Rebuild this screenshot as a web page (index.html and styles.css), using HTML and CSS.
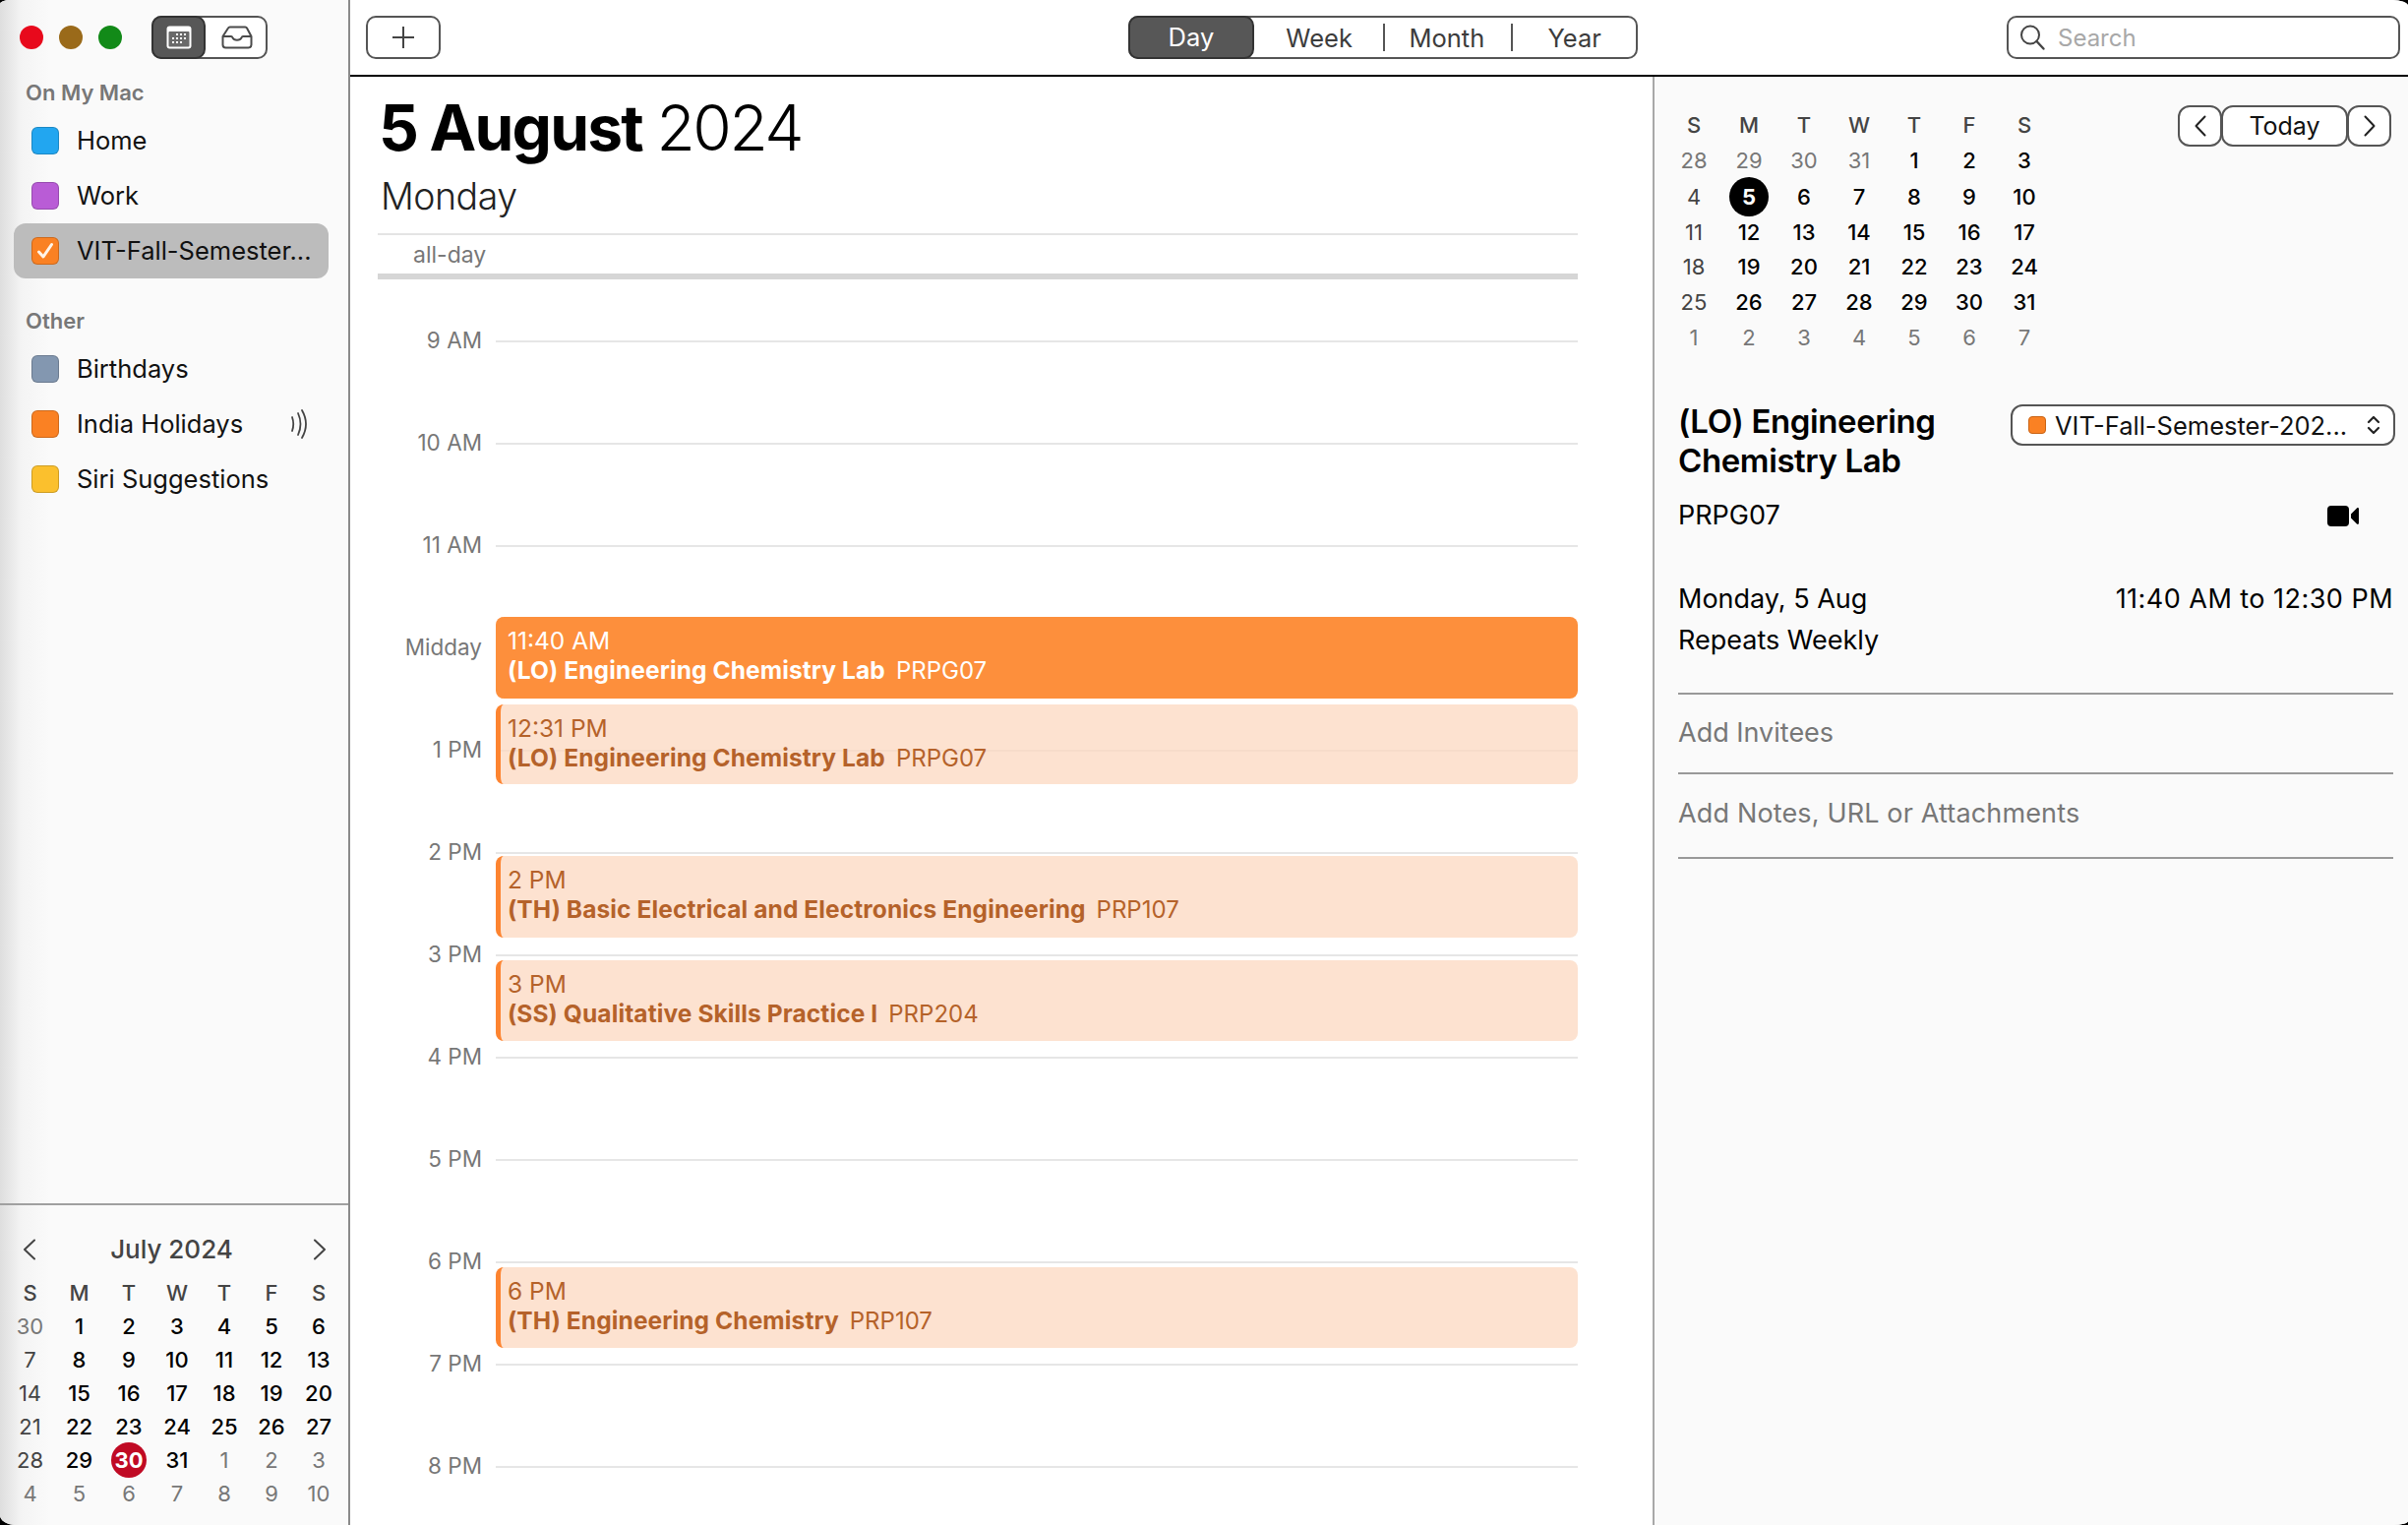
FILE: index.html
```html
<!DOCTYPE html>
<html lang="en">
<head>
<meta charset="utf-8">
<title>Calendar</title>
<link rel="stylesheet" href="styles.css">
</head>
<body>
<div class="app">
  <aside class="sidebar">
    <div class="side-top">
      <div class="lights"><span class="light red"></span><span class="light amber"></span><span class="light green"></span></div>
      <div class="view-toggle">
        <span class="toggle-on">
          <svg width="26" height="24" viewBox="0 0 26 24"><rect x="0.5" y="0.5" width="25" height="23" rx="3" fill="#fff"/><rect x="2.5" y="6" width="21" height="15.5" rx="1" fill="#6a6a6a"/><g fill="#fff"><rect x="10" y="8" width="2" height="2"/><rect x="14" y="8" width="2" height="2"/><rect x="18" y="8" width="2" height="2"/><rect x="6" y="12" width="2" height="2"/><rect x="10" y="12" width="2" height="2"/><rect x="14" y="12" width="2" height="2"/><rect x="18" y="12" width="2" height="2"/><rect x="6" y="16" width="2" height="2"/><rect x="10" y="16" width="2" height="2"/><rect x="14" y="16" width="2" height="2"/></g></svg>
        </span>
        <span class="toggle-off">
          <svg width="32" height="24" viewBox="0 0 32 24" fill="none" stroke="#4a4a4a" stroke-width="2" stroke-linejoin="round"><path d="M1.5 11 7 2.5a2 2 0 0 1 1.700-1h15.600a2 2 0 0 1 1.700 1L30.500 11v8.500a3 3 0 0 1-3 3h-23a3 3 0 0 1-3-3Z"/><path d="M1.500 11H10c.8 0 1.200.6 1.500 1.300.6 1.400 2.200 2.400 4.500 2.400s3.900-1 4.500-2.400c.3-.7.7-1.300 1.500-1.300h8.500"/></svg>
        </span>
      </div>
    </div>
    <h2 class="group-title">On My Mac</h2>
    <ul class="cal-list">
      <li class="cal-row"><span class="swatch s-blue"></span><span class="cal-name">Home</span></li>
      <li class="cal-row"><span class="swatch s-purple"></span><span class="cal-name">Work</span></li>
      <li class="cal-row selected"><span class="swatch s-orange"><svg width="22" height="22" viewBox="0 0 22 22" fill="none" stroke="#fff4e8" stroke-width="3" stroke-linecap="round" stroke-linejoin="round"><path d="M4.500 12 9 17 17.500 4.500"/></svg></span><span class="cal-name">VIT-Fall-Semester...</span></li>
    </ul>
    <h2 class="group-title other">Other</h2>
    <ul class="cal-list">
      <li class="cal-row"><span class="swatch s-slate"></span><span class="cal-name">Birthdays</span></li>
      <li class="cal-row"><span class="swatch s-orange"></span><span class="cal-name">India Holidays</span>
        <svg class="cast" width="22" height="30" viewBox="0 0 22 30" fill="none" stroke="#444" stroke-width="1.800" stroke-linecap="round"><path d="M3 8q2.500 7 0 14"/><path d="M9 4q5 11 0 22"/><path d="M13 1q8 14 0 28"/></svg>
      </li>
      <li class="cal-row"><span class="swatch s-yellow"></span><span class="cal-name">Siri Suggestions</span></li>
    </ul>
    <div class="side-cal">
      <div class="side-cal-head">
        <svg width="14" height="22" viewBox="0 0 14 22" fill="none" stroke="#444" stroke-width="2" stroke-linecap="round" stroke-linejoin="round"><path d="M12 1.500 2 11l10 9.500"/></svg>
        <span class="side-cal-title">July 2024</span>
        <svg width="14" height="22" viewBox="0 0 14 22" fill="none" stroke="#444" stroke-width="2" stroke-linecap="round" stroke-linejoin="round"><path d="M2 1.500 12 11 2 20.500"/></svg>
      </div>
      <div class="side-grid">
        <span class="dow">S</span><span class="dow">M</span><span class="dow">T</span><span class="dow">W</span><span class="dow">T</span><span class="dow">F</span><span class="dow">S</span>
        <span class="out">30</span><span>1</span><span>2</span><span>3</span><span>4</span><span>5</span><span>6</span>
        <span class="wkend">7</span><span>8</span><span>9</span><span>10</span><span>11</span><span>12</span><span>13</span>
        <span class="wkend">14</span><span>15</span><span>16</span><span>17</span><span>18</span><span>19</span><span>20</span>
        <span class="wkend">21</span><span>22</span><span>23</span><span>24</span><span>25</span><span>26</span><span>27</span>
        <span class="wkend">28</span><span>29</span><span class="today-red"><b>30</b></span><span>31</span><span class="out">1</span><span class="out">2</span><span class="out">3</span>
        <span class="out">4</span><span class="out">5</span><span class="out">6</span><span class="out">7</span><span class="out">8</span><span class="out">9</span><span class="out">10</span>
      </div>
    </div>
  </aside>

  <div class="content">
    <header class="toolbar">
      <button class="btn-add"><svg width="22" height="22" viewBox="0 0 22 22" stroke="#444" stroke-width="2"><path d="M11 0v22M0 11h22"/></svg></button>
      <nav class="segments">
        <span class="seg seg-day">Day</span>
        <span class="seg seg-week">Week</span>
        <i class="seg-sep"></i>
        <span class="seg seg-month">Month</span>
        <i class="seg-sep"></i>
        <span class="seg seg-year">Year</span>
      </nav>
      <div class="search">
        <svg width="28" height="28" viewBox="0 0 28 28" fill="none" stroke="#444" stroke-width="2" stroke-linecap="round"><circle cx="12" cy="11.500" r="9"/><path d="m18.500 18 7 7.500" stroke-width="2.400"/></svg>
        <span>Search</span>
      </div>
    </header>

    <div class="body">
      <main class="day">
        <h1 class="day-title"><b>5 August</b> 2024</h1>
        <p class="day-name">Monday</p>
        <div class="allday"><span>all-day</span></div>
        <div class="grid">
          <div class="hour"><span>9 AM</span><i></i></div>
          <div class="hour"><span>10 AM</span><i></i></div>
          <div class="hour"><span>11 AM</span><i></i></div>
          <div class="hour"><span>Midday</span><i></i></div>
          <div class="hour"><span>1 PM</span><i></i></div>
          <div class="hour"><span>2 PM</span><i></i></div>
          <div class="hour"><span>3 PM</span><i></i></div>
          <div class="hour"><span>4 PM</span><i></i></div>
          <div class="hour"><span>5 PM</span><i></i></div>
          <div class="hour"><span>6 PM</span><i></i></div>
          <div class="hour"><span>7 PM</span><i></i></div>
          <div class="hour"><span>8 PM</span><i></i></div>

          <div class="event active" style="top:343px;height:83px"><div>11:40 AM</div><div><b>(LO) Engineering Chemistry Lab</b><span class="room">PRPG07</span></div></div>
          <div class="event" style="top:432px;height:81px"><div>12:31 PM</div><div><b>(LO) Engineering Chemistry Lab</b><span class="room">PRPG07</span></div></div>
          <div class="event" style="top:586px;height:83px"><div>2 PM</div><div><b>(TH) Basic Electrical and Electronics Engineering</b><span class="room">PRP107</span></div></div>
          <div class="event" style="top:692px;height:82px"><div>3 PM</div><div><b>(SS) Qualitative Skills Practice I</b><span class="room">PRP204</span></div></div>
          <div class="event" style="top:1004px;height:82px"><div>6 PM</div><div><b>(TH) Engineering Chemistry</b><span class="room">PRP107</span></div></div>
        </div>
      </main>

      <section class="detail">
        <div class="detail-top">
          <div class="mini">
            <span class="dow">S</span><span class="dow">M</span><span class="dow">T</span><span class="dow">W</span><span class="dow">T</span><span class="dow">F</span><span class="dow">S</span>
            <span class="out">28</span><span class="out">29</span><span class="out">30</span><span class="out">31</span><span>1</span><span>2</span><span>3</span>
            <span class="wkend">4</span><span class="today-black"><b>5</b></span><span>6</span><span>7</span><span>8</span><span>9</span><span>10</span>
            <span class="wkend">11</span><span>12</span><span>13</span><span>14</span><span>15</span><span>16</span><span>17</span>
            <span class="wkend">18</span><span>19</span><span>20</span><span>21</span><span>22</span><span>23</span><span>24</span>
            <span class="wkend">25</span><span>26</span><span>27</span><span>28</span><span>29</span><span>30</span><span>31</span>
            <span class="out">1</span><span class="out">2</span><span class="out">3</span><span class="out">4</span><span class="out">5</span><span class="out">6</span><span class="out">7</span>
          </div>
          <div class="stepper">
            <button class="step"><svg width="12" height="22" viewBox="0 0 12 22" fill="none" stroke="#222" stroke-width="2" stroke-linecap="round" stroke-linejoin="round"><path d="M10.500 1.500 1.500 11l9 9.500"/></svg></button>
            <button class="step today-btn">Today</button>
            <button class="step"><svg width="12" height="22" viewBox="0 0 12 22" fill="none" stroke="#222" stroke-width="2" stroke-linecap="round" stroke-linejoin="round"><path d="M1.500 1.500 10.500 11l-9 9.500"/></svg></button>
          </div>
        </div>
        <div class="info">
          <div class="info-head">
            <h3 class="ev-title">(LO) Engineering Chemistry Lab</h3>
            <div class="picker">
              <span class="picker-dot"></span>
              <span class="picker-text">VIT-Fall-Semester-202...</span>
              <svg class="picker-arrows" width="14" height="20" viewBox="0 0 14 20" fill="none" stroke="#222" stroke-width="2.200" stroke-linecap="round" stroke-linejoin="round"><path d="m2 7 5-5 5 5M2 13l5 5 5-5"/></svg>
            </div>
          </div>
          <div class="loc-row">
            <span>PRPG07</span>
            <svg width="32" height="22" viewBox="0 0 32 22" fill="#000"><rect x="0" y="0" width="22" height="21" rx="4"/><path d="M24 8.500 30 2.500c.8-.8 2-.3 2 .8v14.400c0 1.100-1.200 1.600-2 .8l-6-6Z"/></svg>
          </div>
          <div class="when"><span>Monday, 5 Aug</span><span class="when-time">11:40 AM to 12:30 PM</span></div>
          <div class="repeat">Repeats Weekly</div>
          <div class="field first">Add Invitees</div>
          <div class="field second">Add Notes, URL or Attachments</div>
        </div>
      </section>
    </div>
  </div>
</div>
</body>
</html>
```

FILE: styles.css
```css
* { box-sizing: border-box; }
html, body { margin: 0; padding: 0; background: #000; }
body { font-family: Inter, "Liberation Sans", sans-serif; color: #000; overflow: hidden; }
ul { list-style: none; margin: 0; padding: 0; }
h1, h2, h3, p { margin: 0; font-weight: normal; }
button { font: inherit; background: none; padding: 0; }

.app { display: flex; width: 2448px; height: 1550px; background: #fff; border-radius: 10px 16px 15px 16px / 4px 6px 4px 10px; overflow: hidden; }

/* Sidebar */
.sidebar { width: 356px; flex: none; display: flex; flex-direction: column; border-right: 2px solid #8a8a8a; background: linear-gradient(90deg, #dedede 0, #f4f4f4 22px, #fafafa 50px); }
.side-top { display: flex; align-items: center; height: 76px; }
.lights { display: flex; gap: 16px; padding-left: 20px; }
.light { width: 24px; height: 24px; border-radius: 50%; }
.red { background: #e8091c; }
.amber { background: #9a6a1a; }
.green { background: #128a18; }
.view-toggle { display: flex; margin-left: 30px; width: 118px; height: 44px; border: 2px solid #555; border-radius: 10px; background: #fff; }
.toggle-on { width: 55px; margin: -2px 0 -2px -2px; background: #575757; border: 2px solid #333; border-radius: 10px; display: flex; align-items: center; justify-content: center; }
.toggle-off { flex: 1; display: flex; align-items: center; justify-content: center; padding-left: 3px; }
.group-title { font-size: 22px; font-weight: 600; color: #777; padding-left: 26px; line-height: 36px; }
.other { margin-top: 25px; }
.cal-list { padding: 3px 14px 0; width: 348px; }
.cal-row { display: flex; align-items: center; height: 56px; padding-left: 18px; border-radius: 12px; }
.cal-row.selected { background: #bcbcbc; }
.swatch { width: 28px; height: 28px; flex: none; border-radius: 6px; border: 1px solid rgba(0,0,0,.18); display: flex; align-items: center; justify-content: center; }
.s-blue { background: #22a6f0; }
.s-purple { background: #b95cd6; }
.s-orange { background: #fa8123; }
.s-slate { background: #8397b0; }
.s-yellow { background: #fbc02d; }
.cal-name { font-size: 25.5px; margin: -2px 0 0 18px; white-space: nowrap; color: #111; }
.cast { margin-left: auto; margin-right: 18px; }

.side-cal { margin-top: auto; border-top: 2px solid #a0a0a0; padding: 30px 6px 15px 6px; }
.side-cal-head { display: flex; align-items: center; justify-content: space-between; padding: 0 16px 0 17px; height: 28px; }
.side-cal-head svg { margin-top: 2px; }
.side-cal-title { font-size: 26px; font-weight: 500; color: #444; margin-right: 6px; }
.side-grid { display: grid; grid-template-columns: 49px 51px 50px 48px 48px 48px 48px; grid-auto-rows: 34px; margin-top: 14px; font-size: 22px; font-weight: 500; text-align: center; line-height: 34px; }
.dow { color: #444; }
.out { color: #777; font-weight: 400; }
.wkend { color: #444; font-weight: 400; }
.today-red b, .today-black b { display: inline-block; border-radius: 50%; color: #fff; font-weight: 700; }
.today-red b { width: 36px; height: 36px; line-height: 36px; margin-top: -1px; background: #c00a24; }

/* Toolbar */
.content { flex: 1; min-width: 0; display: flex; flex-direction: column; }
.toolbar { height: 78px; flex: none; display: flex; align-items: flex-start; padding: 16px 8px 0 16px; border-bottom: 2px solid #000; background: #fff; }
.btn-add { width: 76px; height: 44px; border: 2px solid #555; border-radius: 10px; background: #fff; display: flex; align-items: center; justify-content: center; }
.segments { margin-left: 699px; width: 518px; height: 44px; border: 2px solid #555; border-radius: 10px; display: flex; align-items: center; font-size: 25.5px; color: #3c3c3c; }
.seg { display: block; text-align: center; }
.seg-day { width: 128px; height: 44px; margin-left: -2px; background: #575757; border: 2px solid #333; border-radius: 10px; color: #fff; line-height: 40px; }
.seg-week { width: 131px; padding-left: 2px; }
.seg-month { width: 129px; padding-right: 2px; }
.seg-year { width: 125px; }
.seg-sep { width: 2px; height: 28px; background: #555; flex: none; }
.search { margin-left: auto; width: 400px; height: 44px; border: 2px solid #555; border-radius: 10px; display: flex; align-items: center; padding-left: 10px; gap: 12px; font-size: 24px; color: #a8a8a8; }

/* Day view */
.body { flex: 1; min-height: 0; display: flex; }
.day { width: 1324px; flex: none; padding: 0 76px 0 28px; overflow: hidden; }
.day-title { font-size: 64px; font-weight: 300; letter-spacing: -2.400px; word-spacing: -1px; line-height: 80px; padding: 12px 0 0 1px; height: 90px; }
.day-title b { font-weight: 700; letter-spacing: -1.800px; }
.day-name { font-size: 37.5px; font-weight: 300; letter-spacing: -.5px; color: #222; line-height: 50px; padding: 7px 0 0 3px; height: 69px; }
.allday { box-sizing: content-box; border-top: 2px solid #e4e4e4; border-bottom: 6px solid #d6d6d6; height: 33px; padding: 6px 0 0 36px; font-size: 23px; color: #777; line-height: 28px; }
.grid { position: relative; padding-top: 11px; }
.hour { display: flex; align-items: center; height: 104px; }
.hour span { width: 106px; text-align: right; font-size: 22.5px; color: #777; margin-top: -4px; }
.hour i { flex: 1; height: 2px; margin-left: 14px; background: #e6e6e6; }
.event { position: absolute; left: 120px; right: 0; background: rgba(252,216,192,.75); border-left: 5px solid #fd8430; border-radius: 8px; padding: 9px 7px 0; color: #b5622a; font-size: 24.5px; line-height: 30px; }
.event b { font-weight: 700; letter-spacing: .1px; }
.room { margin-left: 11px; font-size: 24px; }
.event.active { background: #fd8f3c; border-left-color: #fd8f3c; color: #fff; }

/* Detail */
.detail { flex: 1; min-width: 0; border-left: 2px solid #a8a8a8; background: #fafafa; }
.detail-top { display: flex; justify-content: space-between; padding: 31px 17px 0 12px; }
.mini { display: grid; grid-template-columns: repeat(7, 56px); grid-template-rows: 36px 35px 39px 34px 36px 36px 36px; font-size: 22px; font-weight: 500; text-align: center; line-height: 36px; }
.mini span { align-self: center; }
.today-black b { width: 40px; height: 40px; line-height: 40px; background: #000; }
.stepper { display: flex; margin-top: -2px; height: 42px; }
.step { width: 45px; height: 42px; border: 2px solid #555; border-radius: 12px; background: #fff; display: flex; align-items: center; justify-content: center; }
.today-btn { width: 129px; margin: 0 -1px; font-size: 25px; color: #111; position: relative; }
.info { padding: 47px 15px 0 24px; }
.info-head { display: flex; justify-content: space-between; align-items: flex-start; }
.ev-title { width: 310px; font-size: 33px; font-weight: 600; line-height: 40px; letter-spacing: -.4px; }
.picker { width: 391px; height: 42px; margin-top: 3px; margin-right: -2px; border: 2px solid #555; border-radius: 12px; background: #fff; display: flex; align-items: center; padding-left: 16px; font-size: 25.5px; color: #111; }
.picker-dot { width: 18px; height: 18px; border-radius: 4px; background: #fa8123; border: 1px solid #c96416; flex: none; }
.picker-text { margin-left: 9px; width: 299px; white-space: nowrap; }
.picker-arrows { margin-left: 18px; flex: none; }
.loc-row { display: flex; justify-content: space-between; align-items: center; height: 40px; margin-top: 15px; font-size: 27px; padding-right: 35px; }
.loc-row svg { margin-top: 3px; }
.when { display: flex; justify-content: space-between; margin-top: 46px; font-size: 27px; line-height: 40px; }
.when-time { letter-spacing: .47px; }
.repeat { font-size: 27px; line-height: 40px; margin-top: 2px; height: 75px; border-bottom: 2px solid #999; }
.field { font-size: 27px; color: #777; line-height: 40px; border-bottom: 2px solid #999; }
.field.first { height: 81px; padding-top: 19px; }
.field.second { height: 86px; padding-top: 20px; letter-spacing: .15px; }
```
